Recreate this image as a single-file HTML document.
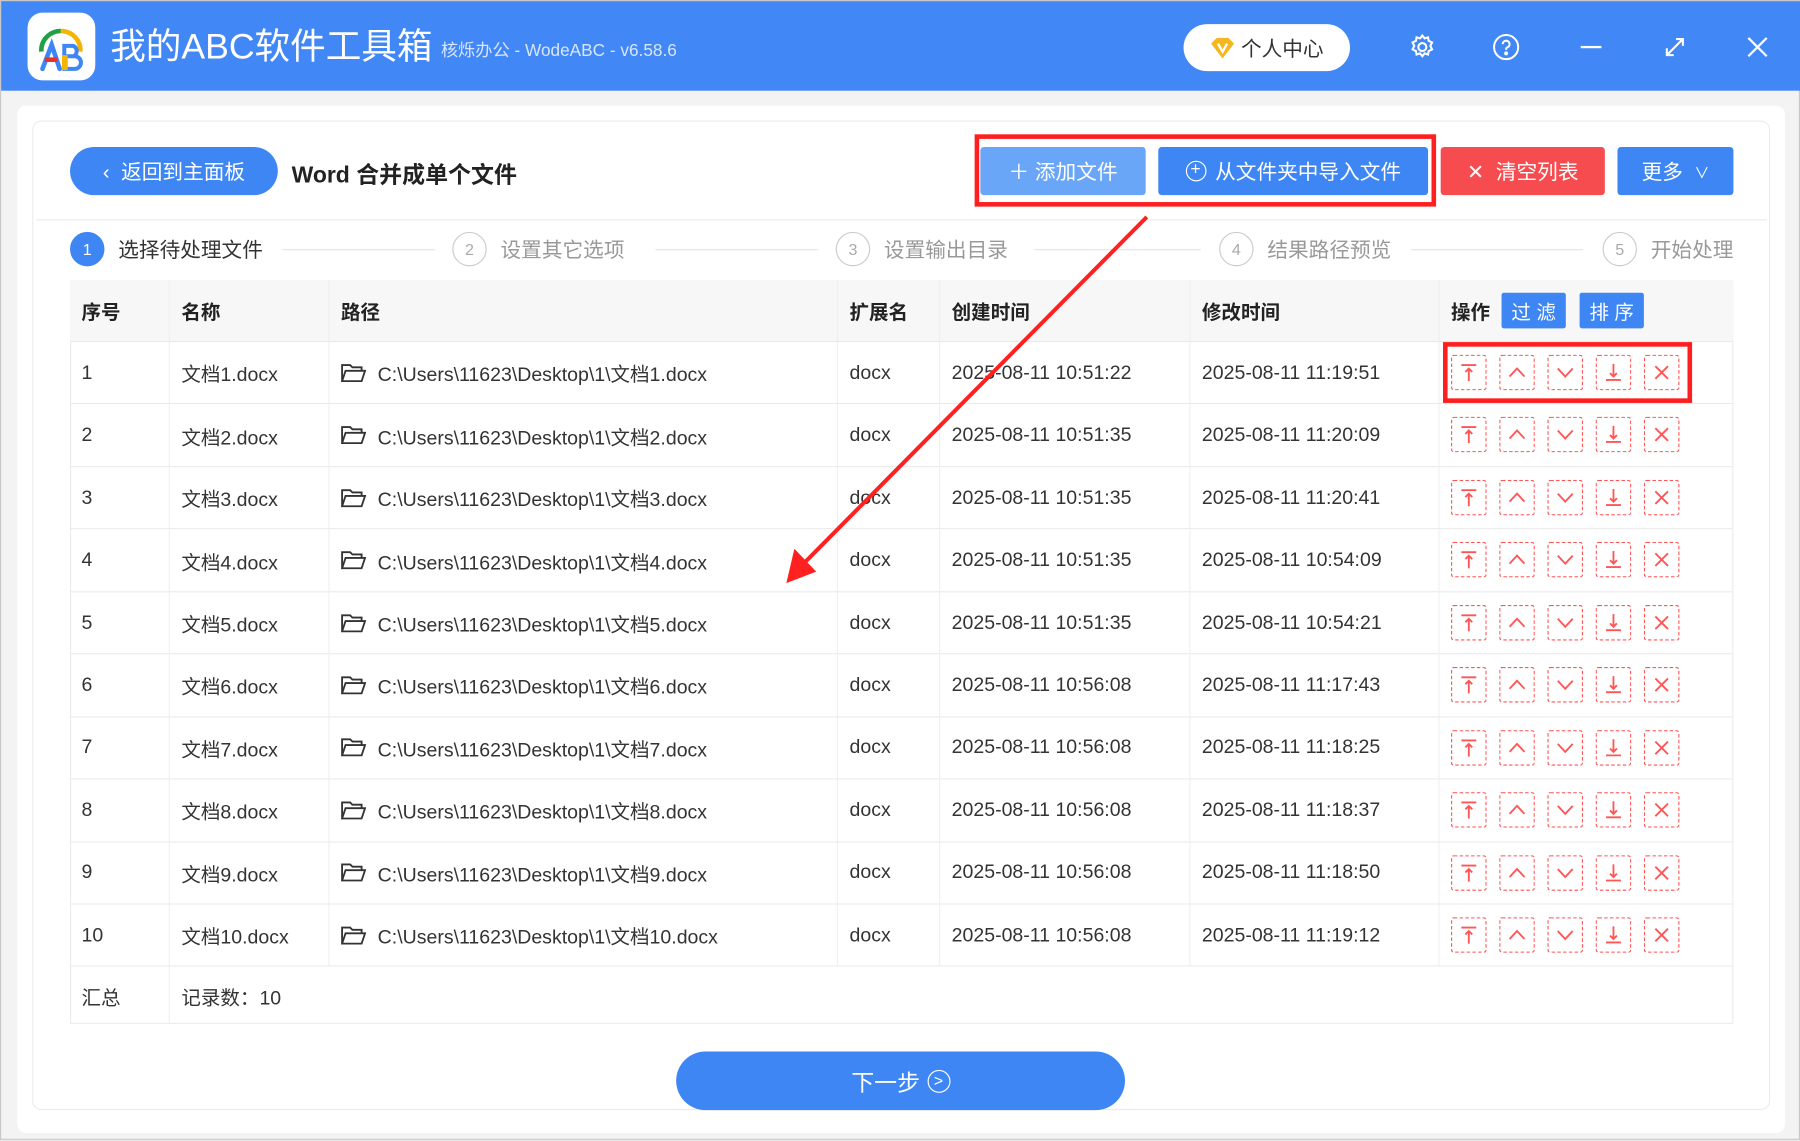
<!DOCTYPE html>
<html><head><meta charset="utf-8"><style>
*{margin:0;padding:0;box-sizing:border-box}
html,body{width:1800px;height:1140px;overflow:hidden;background:#e9e9e9}
#s{position:absolute;left:0;top:0;width:1568px;height:993px;transform:scale(1.147959);transform-origin:0 0;font-family:"Liberation Sans","Noto Sans CJK SC",sans-serif;color:#333;background:#f3f3f3;border:1px solid #c8c8c8}
.a{position:absolute}
.hdr{left:0;top:0;width:1568px;height:78px;background:#4187f6}
.btn{position:absolute;color:#fff;font-size:18px;display:flex;align-items:center;justify-content:center;border-radius:3px}
.row{position:absolute;left:60px;width:1449px;height:54.45px;border-bottom:1px solid #ebebeb;font-size:17px;display:flex;align-items:center}
.c{position:absolute;top:0;height:100%;display:flex;align-items:center;border-right:1px solid #f0f0f0;padding-left:10px}
.ops{position:absolute;left:1203px;top:11px;display:flex;gap:11px}
.ops svg{width:31px;height:31px}
.step{position:absolute;top:201px;font-size:18px;color:#999;display:flex;align-items:center}
.circ{width:30px;height:30px;border-radius:50%;border:1px solid #ccc;color:#aaa;font-size:14px;display:flex;align-items:center;justify-content:center;margin-right:12px}
.ln{position:absolute;top:216px;height:1px;background:#e6e6e6}
</style></head><body><div id="s">
<div class="a hdr"></div>
<div class="a" style="left:23px;top:10px;width:59px;height:59px;background:#fff;border-radius:13px">
<svg width="59" height="59" viewBox="0 0 59 59"><path d="M12 34 A17 17 0 0 1 29 16" stroke="#22a045" stroke-width="4" fill="none"/><path d="M29 16 A17 17 0 0 1 46 34" stroke="#f5b400" stroke-width="4" fill="none"/><path d="M13 49 L21 28 L28 49" stroke="#3d86f5" stroke-width="4" fill="none" stroke-linecap="round"/><path d="M15 41 H26" stroke="#e8322f" stroke-width="4"/><path d="M32 29 H40 a5 5 0 0 1 0 9 H32 Z M32 38 H41 a5.5 5.5 0 0 1 0 11 H32 Z" stroke="#3d86f5" stroke-width="3.5" fill="#fff"/><rect x="30" y="37" width="5" height="13" fill="#f5b400"/></svg></div>
<div class="a" style="left:95px;top:20px;font-size:31px;color:#fff;line-height:40px">我的ABC软件工具箱</div>
<div class="a" style="left:383px;top:32px;font-size:15px;color:#d8e6fd">核烁办公 - WodeABC - v6.58.6</div>
<div class="a" style="left:1030px;top:20px;width:145px;height:41px;background:#fff;border-radius:21px;font-size:18px;display:flex;align-items:center;padding-left:22px;color:#333"><svg width="24" height="24" viewBox="0 0 24 24" style="margin-right:4px"><path d="M2 8 L7 3 H17 L22 8 L12 21 Z" fill="#f5b622"/><path d="M8 8 L12 15 L16 8" stroke="#fff" stroke-width="2" fill="none"/></svg>个人中心</div>
<svg class="a" style="left:1226px;top:28px" width="24" height="24" viewBox="0 0 24 24" fill="none" stroke="#fff" stroke-width="1.8"><circle cx="12" cy="12" r="3.5"/><path d="M12 2 l2 2.5 3-1 .5 3 3 1.5-1.5 3 1.5 3-3 1.5-.5 3-3-1-2 2.5-2-2.5-3 1-.5-3-3-1.5 1.5-3-1.5-3 3-1.5.5-3 3 1z"/></svg>
<svg class="a" style="left:1299px;top:28px" width="24" height="24" viewBox="0 0 24 24" fill="none" stroke="#fff" stroke-width="1.8"><circle cx="12" cy="12" r="10.5"/><path d="M9 9.5a3 3 0 1 1 4 2.8c-1 .4-1 1-1 2.2"/><circle cx="12" cy="17.5" r=".8" fill="#fff"/></svg>
<div class="a" style="left:1376px;top:39px;width:18px;height:2px;background:#fff"></div>
<svg class="a" style="left:1448px;top:30px" width="20" height="20" viewBox="0 0 20 20" stroke="#fff" stroke-width="1.8" fill="none"><path d="M3 17 L17 3 M11 3 H17 V9 M3 11 V17 H9"/></svg>
<svg class="a" style="left:1521px;top:31px" width="18" height="18" viewBox="0 0 18 18" stroke="#fff" stroke-width="2"><path d="M1 1 L17 17 M17 1 L1 17"/></svg>

<div class="a" style="left:14px;top:91px;width:1540px;height:895px;background:#fff;border-radius:8px"></div>
<div class="a" style="left:27px;top:104px;width:1514px;height:862px;background:#fff;border:1px solid #ececec;border-radius:8px"></div>
<div class="a" style="left:30px;top:190px;width:1508px;height:1px;background:#ececec"></div>

<div class="btn" style="left:60px;top:127px;width:181px;height:42px;border-radius:21px;background:#3e86f4">&#8249;&nbsp;&nbsp;返回到主面板</div>
<div class="a" style="left:253px;top:135px;font-size:20px;font-weight:bold;color:#222">Word 合并成单个文件</div>
<div class="btn" style="left:853px;top:127px;width:144px;height:42px;background:#6aa6f8">＋ 添加文件</div>
<div class="btn" style="left:1008px;top:127px;width:235px;height:42px;background:#3e86f4"><span style="display:inline-block;width:18px;height:18px;border:1.5px solid #fff;border-radius:50%;font-size:15px;line-height:14px;text-align:center;margin-right:8px">+</span>从文件夹中导入文件</div>
<div class="a" style="left:848px;top:116px;width:402px;height:63px;border:4px solid #ff1f1f"></div>
<div class="btn" style="left:1254px;top:127px;width:143px;height:42px;background:#f74c4f">✕&nbsp; 清空列表</div>
<div class="btn" style="left:1408px;top:127px;width:101px;height:42px;background:#3e86f4">更多 &nbsp;<span style="font-size:13px">∨</span></div>

<div class="step" style="left:60px;color:#333"><div class="circ" style="background:#3e86f4;border-color:#3e86f4;color:#fff">1</div>选择待处理文件</div>
<div class="ln" style="left:245px;width:133px"></div>
<div class="step" style="left:393px"><div class="circ">2</div>设置其它选项</div>
<div class="ln" style="left:570px;width:142px"></div>
<div class="step" style="left:727px"><div class="circ">3</div>设置输出目录</div>
<div class="ln" style="left:900px;width:145px"></div>
<div class="step" style="left:1061px"><div class="circ">4</div>结果路径预览</div>
<div class="ln" style="left:1228px;width:150px"></div>
<div class="step" style="left:1395px"><div class="circ">5</div>开始处理</div>

<div class="a" style="left:60px;top:243px;width:1449px;height:648px;border:1px solid #ececec"></div>
<div class="row" style="top:243px;height:54px;background:#f7f7f7;font-weight:bold;font-size:17px;color:#222">
<div class="c" style="left:0;width:87px">序号</div><div class="c" style="left:87px;width:139px">名称</div><div class="c" style="left:226px;width:443px">路径</div><div class="c" style="left:669px;width:89px">扩展名</div><div class="c" style="left:758px;width:218px">创建时间</div><div class="c" style="left:976px;width:217px">修改时间</div><div class="c" style="left:1193px;width:256px;border:none">操作
<span style="margin-left:10px;background:#3e86f4;color:#fff;font-weight:normal;width:56px;height:31px;display:inline-flex;align-items:center;justify-content:center;border-radius:2px">过 滤</span>
<span style="margin-left:12px;background:#3e86f4;color:#fff;font-weight:normal;width:56px;height:31px;display:inline-flex;align-items:center;justify-content:center;border-radius:2px">排 序</span></div></div>

<svg width="0" height="0" style="position:absolute"><defs>
<g id="b"><rect x=".5" y=".5" width="30" height="30" rx="2" fill="none" stroke="#f55" stroke-dasharray="3 2"/></g>
<g id="i1"><use href="#b"/><path d="M9 9 H22 M15.5 23 V12 M12.5 15 L15.5 12 L18.5 15" stroke="#f55" stroke-width="1.6" fill="none"/></g>
<g id="i2"><use href="#b"/><path d="M9 19 L15.5 12 L22 19" stroke="#f55" stroke-width="1.6" fill="none"/></g>
<g id="i3"><use href="#b"/><path d="M9 12 L15.5 19 L22 12" stroke="#f55" stroke-width="1.6" fill="none"/></g>
<g id="i4"><use href="#b"/><path d="M9 22 H22 M15.5 8 V19 M12.5 16 L15.5 19 L18.5 16" stroke="#f55" stroke-width="1.6" fill="none"/></g>
<g id="i5"><use href="#b"/><path d="M10 10 L21 21 M21 10 L10 21" stroke="#f55" stroke-width="1.6" fill="none"/></g>
</defs></svg>

<div id="rows"></div>
<div class="row" style="top:841px;height:50px;border:none"><div class="c" style="left:0;width:87px">汇总</div><div class="c" style="left:87px;width:400px;border:none">记录数：10</div></div>

<div class="a" style="left:1256px;top:297px;width:217px;height:53px;border:4px solid #ff1f1f"></div>

<svg class="a" style="left:0;top:0" width="1568" height="993"><path d="M998 188 L697 492" stroke="#ff2020" stroke-width="3.5"/><path d="M684 507 L691 477 L710 497 Z" fill="#ff2020"/></svg>

<div class="btn" style="left:588px;top:915px;width:391px;height:51px;border-radius:26px;background:#3e86f4;font-size:20px">下一步 <span style="display:inline-block;width:20px;height:20px;border:1.6px solid #fff;border-radius:50%;font-size:14px;line-height:16px;text-align:center;margin-left:6px">&gt;</span></div>
</div>
<script>
var cr=["10:51:22","10:51:35","10:51:35","10:51:35","10:51:35","10:56:08","10:56:08","10:56:08","10:56:08","10:56:08"];
var md=["11:19:51","11:20:09","11:20:41","10:54:09","10:54:21","11:17:43","11:18:25","11:18:37","11:18:50","11:19:12"];
var h="",fold='<svg width="22" height="18" viewBox="0 0 22 18" style="margin-right:10px" fill="none" stroke="#333" stroke-width="1.6"><path d="M1 16 V2 H8 L10 4 H18 V7 M1 16 L4 7 H21 L18 16 Z"/></svg>';
for(var i=0;i<10;i++){var n=i+1;h+='<div class="row" style="top:'+(297+i*54.45)+'px"><div class="c" style="left:0;width:87px">'+n+'</div><div class="c" style="left:87px;width:139px">文档'+n+'.docx</div><div class="c" style="left:226px;width:443px">'+fold+'C:\\Users\\11623\\Desktop\\1\\文档'+n+'.docx</div><div class="c" style="left:669px;width:89px">docx</div><div class="c" style="left:758px;width:218px">2025-08-11 '+cr[i]+'</div><div class="c" style="left:976px;width:217px">2025-08-11 '+md[i]+'</div><div class="ops"><svg><use href="#i1"/></svg><svg><use href="#i2"/></svg><svg><use href="#i3"/></svg><svg><use href="#i4"/></svg><svg><use href="#i5"/></svg></div></div>';}
document.getElementById("rows").innerHTML=h;
</script>
</body></html>
